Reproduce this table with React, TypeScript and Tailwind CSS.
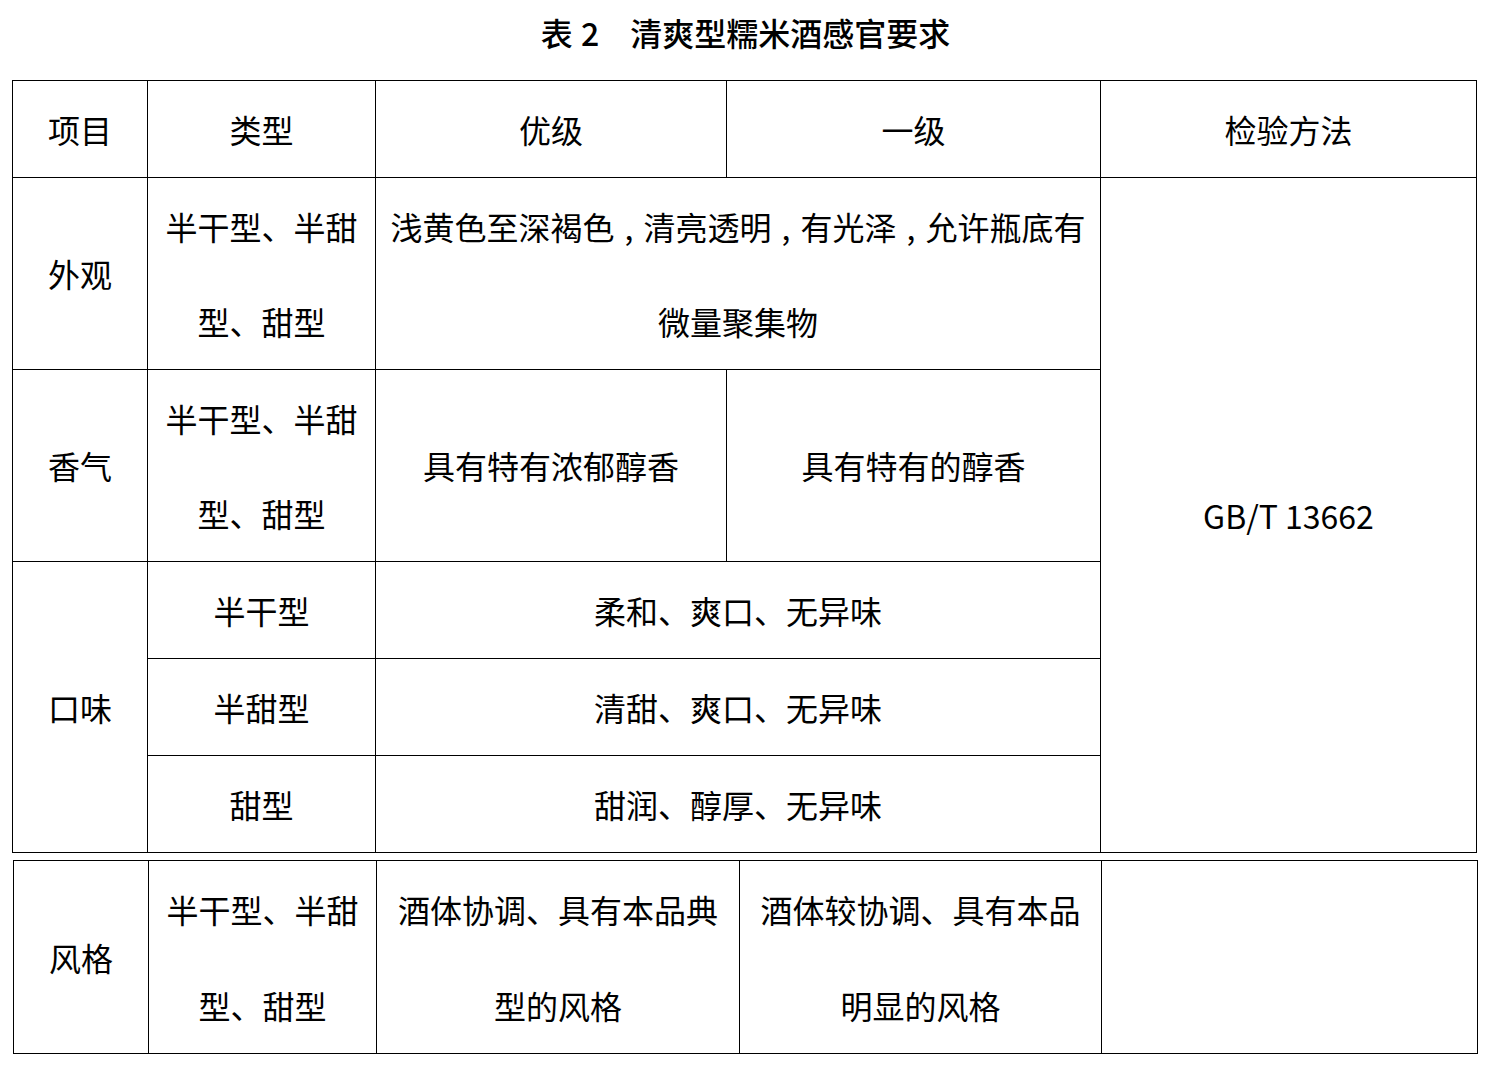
import React from "react";

const cell = "border border-black p-0 text-center align-middle";

function Comma() {
  return <span className="inline-block w-[29px] text-center">,</span>;
}

export default function App() {
  return (
    <div className="min-h-[1069px] w-[1491px] bg-white text-black font-['Noto_Sans_CJK_SC',sans-serif] text-[32px]">
      <div className="flex h-[64px] items-center justify-center font-medium leading-none">
        <span>表</span>
        <span className="ml-[8px]">2</span>
        <span className="ml-[31px]">清爽型糯米酒感官要求</span>
      </div>

      <table className="ml-[12px] mt-[16px] w-[1464px] table-fixed border-collapse leading-[95px]">
        <colgroup>
          <col className="w-[135px]" />
          <col className="w-[228px]" />
          <col className="w-[351px]" />
          <col className="w-[374px]" />
          <col className="w-[376px]" />
        </colgroup>
        <tbody>
          <tr className="h-[97px]">
            <td className={cell}>项目</td>
            <td className={cell}>类型</td>
            <td className={cell}>优级</td>
            <td className={cell}>一级</td>
            <td className={cell}>检验方法</td>
          </tr>
          <tr className="h-[192px]">
            <td className={cell}>外观</td>
            <td className={cell}>
              半干型、半甜
              <br />
              型、甜型
            </td>
            <td className={cell} colSpan={2}>
              浅黄色至深褐色<Comma />清亮透明<Comma />有光泽<Comma />允许瓶底有
              <br />
              微量聚集物
            </td>
            <td className={cell} rowSpan={5}>
              GB/T 13662
            </td>
          </tr>
          <tr className="h-[192px]">
            <td className={cell}>香气</td>
            <td className={cell}>
              半干型、半甜
              <br />
              型、甜型
            </td>
            <td className={cell}>具有特有浓郁醇香</td>
            <td className={cell}>具有特有的醇香</td>
          </tr>
          <tr className="h-[97px]">
            <td className={cell} rowSpan={3}>
              口味
            </td>
            <td className={cell}>半干型</td>
            <td className={cell} colSpan={2}>
              柔和、爽口、无异味
            </td>
          </tr>
          <tr className="h-[97px]">
            <td className={cell}>半甜型</td>
            <td className={cell} colSpan={2}>
              清甜、爽口、无异味
            </td>
          </tr>
          <tr className="h-[97px]">
            <td className={cell}>甜型</td>
            <td className={cell} colSpan={2}>
              甜润、醇厚、无异味
            </td>
          </tr>
        </tbody>
      </table>

      <table className="ml-[13px] mt-[7px] w-[1464px] table-fixed border-collapse leading-[96px]">
        <colgroup>
          <col className="w-[135px]" />
          <col className="w-[228px]" />
          <col className="w-[363px]" />
          <col className="w-[362px]" />
          <col className="w-[376px]" />
        </colgroup>
        <tbody>
          <tr className="h-[193px]">
            <td className={cell}>风格</td>
            <td className={cell}>
              半干型、半甜
              <br />
              型、甜型
            </td>
            <td className={cell}>
              酒体协调、具有本品典
              <br />
              型的风格
            </td>
            <td className={cell}>
              酒体较协调、具有本品
              <br />
              明显的风格
            </td>
            <td className={cell}></td>
          </tr>
        </tbody>
      </table>
    </div>
  );
}
